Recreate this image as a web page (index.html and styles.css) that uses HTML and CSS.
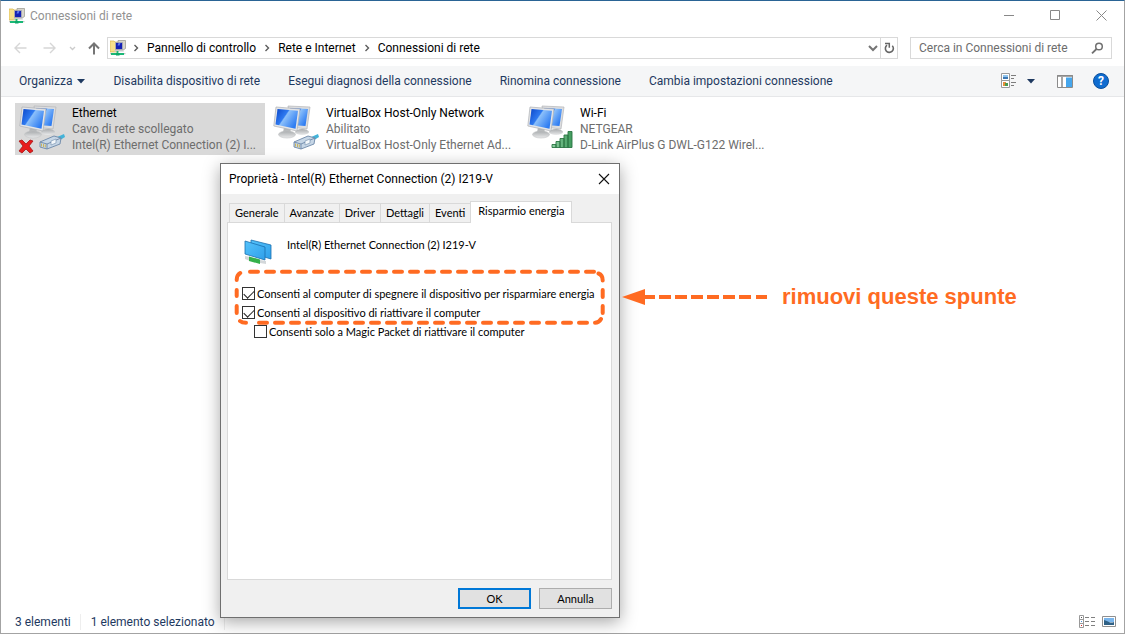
FILE: index.html
```html
<!DOCTYPE html>
<html lang="it">
<head>
<meta charset="utf-8">
<title>Connessioni di rete</title>
<link rel="stylesheet" href="styles.css">
</head>
<body>
<svg class="defs" aria-hidden="true">
  <defs>
    <linearGradient id="screen" x1="0" y1="0" x2="1" y2="0.6">
      <stop offset="0" stop-color="#0a46c8"/><stop offset="0.45" stop-color="#2f7af0"/><stop offset="0.5" stop-color="#8cc0fa"/><stop offset="1" stop-color="#2e7cf2"/>
    </linearGradient>
    <linearGradient id="stand" x1="0" y1="0" x2="0" y2="1">
      <stop offset="0" stop-color="#a8abad"/><stop offset="1" stop-color="#e9eaeb"/>
    </linearGradient>
    <linearGradient id="bars" x1="0" y1="0" x2="1" y2="0">
      <stop offset="0" stop-color="#8fd0a2"/><stop offset="1" stop-color="#3f9a5c"/>
    </linearGradient>
    <linearGradient id="flat" x1="0" y1="0" x2="1" y2="1">
      <stop offset="0" stop-color="#55c3fb"/><stop offset="1" stop-color="#2f9fea"/>
    </linearGradient>
  </defs>
  <symbol id="monitors" viewBox="0 0 40 34">
    <ellipse cx="29" cy="27" rx="7" ry="3" fill="url(#stand)"/>
    <path d="M15 1 37 2 34 24 17 22z" fill="#dcdddf" stroke="#b3b5b8" stroke-width=".7"/>
    <path d="M17 3 35 4 32.500 21 18 20z" fill="url(#screen)"/>
    <path d="M11 22h6l1 6h-8z" fill="#b4b7b9"/>
    <ellipse cx="14" cy="29.500" rx="8.500" ry="3.500" fill="url(#stand)" stroke="#c2c4c6" stroke-width=".6"/>
    <path d="M3 2 27 4 24 26 .8 21z" fill="#e4e5e7" stroke="#aeb0b4" stroke-width=".7"/>
    <path d="M4.500 4 25 5.700 22.500 23.800 2.500 19.500z" fill="url(#screen)"/>
  </symbol>
  <symbol id="plug" viewBox="0 0 27 17">
    <path d="M16 5 25 1l1 3-8 5z" fill="#43b3d9"/>
    <path d="M1 9 15 3l7 2-1 6-13 5-7-2z" fill="#c6d6e6" stroke="#6d88a8" stroke-width=".9"/>
    <path d="M1 9l7 2 14-6M8 11v5" fill="none" stroke="#6d88a8" stroke-width=".9"/>
    <path d="M2.500 10.500v3M4.500 11v3M6.300 11.500v3" stroke="#c8b050" stroke-width=".9"/>
    <path d="M12 8l5-2v4l-5 2z" fill="#f4f8fb" stroke="#7f99b5" stroke-width=".7"/>
  </symbol>
  <symbol id="folder" viewBox="0 0 16 16">
    <path d="M0 1h4l1 1h3v10H0z" fill="#f7e08a" stroke="#d6b54c" stroke-width=".7"/>
    <path d="M8 .5h7.500v8l-3 2H8z" fill="#d7d5cb" stroke="#96958c" stroke-width=".7"/>
    <path d="M5.500 2.500h7v7h-7z" fill="#d9dbe6" stroke="#8e90a5" stroke-width=".7"/>
    <path d="M6 3h6v6H6z" fill="#1420b4"/><path d="M8.500 3h2l-1 2.500h-2z" fill="#5f78ec"/>
    <path d="M5 10h8l1 1.500H4z" fill="#c8c9cc"/>
    <path d="M0 13.700h15.500" stroke="#b7bbb9"/><path d="M1 14h13M7.500 11v4" stroke="#19b877" stroke-width="1.800"/><path d="M6 13h3.500v2.500H6z" fill="#0ea768"/>
  </symbol>
  <symbol id="chev" viewBox="0 0 6 8"><path d="M1.500 1 4.500 4 1.500 7" fill="none" stroke="#5c5c5c" stroke-width="1.400"/></symbol>
</svg>

<div class="window">
  <header class="titlebar">
    <svg class="i16"><use href="#folder"/></svg>
    <h1 class="title">Connessioni di rete</h1>
    <div class="controls">
      <button class="icon-btn" aria-label="Riduci a icona"><svg width="11" height="11"><path d="M0 5.500h10" stroke="#888"/></svg></button>
      <button class="icon-btn" aria-label="Ingrandisci"><svg width="11" height="11"><path d="M.5.5h9v9h-9z" fill="none" stroke="#888"/></svg></button>
      <button class="icon-btn" aria-label="Chiudi"><svg width="11" height="11"><path d="M.5.5l10 10M10.500.5l-10 10" stroke="#888" fill="none"/></svg></button>
    </div>
  </header>

  <nav class="navbar">
    <button class="icon-btn" aria-label="Indietro"><svg width="13" height="12"><path d="M12.500 6H1M6 1 1 6l5 5" fill="none" stroke="#d6d6d6" stroke-width="1.400"/></svg></button>
    <button class="icon-btn fwd" aria-label="Avanti"><svg width="13" height="12"><path d="M.5 6H12M7 1l5 5-5 5" fill="none" stroke="#d6d6d6" stroke-width="1.400"/></svg></button>
    <button class="icon-btn recent" aria-label="Posizioni recenti"><svg width="7" height="5"><path d="M1 1l2.500 2.500L6 1" fill="none" stroke="#ccc" stroke-width="1.400"/></svg></button>
    <button class="icon-btn up" aria-label="Su"><svg width="12" height="13"><path d="M6 12.500V1.500M1 6.500l5-5 5 5" fill="none" stroke="#757575" stroke-width="2"/></svg></button>
    <div class="address">
      <svg class="i16"><use href="#folder"/></svg>
      <svg class="chev"><use href="#chev"/></svg><a class="crumb" href="#">Pannello di controllo</a>
      <svg class="chev"><use href="#chev"/></svg><a class="crumb" href="#">Rete e Internet</a>
      <svg class="chev"><use href="#chev"/></svg><a class="crumb" href="#">Connessioni di rete</a>
      <button class="icon-btn drop" aria-label="Percorsi precedenti"><svg width="10" height="7"><path d="M1 1l4 4 4-4" fill="none" stroke="#757575" stroke-width="2"/></svg></button>
      <button class="icon-btn refresh" aria-label="Aggiorna"><svg width="11" height="12"><path d="M8.300 3.700A4 4 0 1 1 3 3.200" fill="none" stroke="#666" stroke-width="1.600"/><path d="M1 1.500h4.300v4.300" fill="none" stroke="#666" stroke-width="1.500"/></svg></button>
    </div>
    <label class="search">
      <input class="search-input" type="text" placeholder="Cerca in Connessioni di rete" aria-label="Cerca in Connessioni di rete">
      <svg width="13" height="12"><circle cx="8" cy="4.500" r="3.300" fill="none" stroke="#707070" stroke-width="1.500"/><path d="M5.500 7 1 11.300" stroke="#707070" stroke-width="1.800"/></svg>
    </label>
  </nav>

  <div class="toolbar">
    <button class="cmd organize">Organizza <svg width="8" height="5"><path d="M0 0h8L4 4.500z" fill="#1e3960"/></svg></button>
    <button class="cmd">Disabilita dispositivo di rete</button>
    <button class="cmd">Esegui diagnosi della connessione</button>
    <button class="cmd">Rinomina connessione</button>
    <button class="cmd">Cambia impostazioni connessione</button>
    <div class="views">
      <button class="icon-btn" aria-label="Cambia visualizzazione"><svg width="16" height="16"><path d="M.5.5h8v7h-8zM.5 7.500h8v7h-8z" fill="#fff" stroke="#9a9a9a"/><path d="M2 2h5v2H2z" fill="#8fc4ee"/><path d="M2 4h5v2H2z" fill="#3c78b4"/><path d="M2 9h3v4H2z" fill="#e58f3c"/><path d="M4 10h3v3H4z" fill="#4a9a50"/><path d="M10 2.500h5M10 5.500h3M10 9.500h5M10 12.500h3" stroke="#7d7d7d"/></svg></button>
      <button class="icon-btn more" aria-label="Altre opzioni"><svg width="8" height="5"><path d="M0 0h8L4 4.500z" fill="#1e3960"/></svg></button>
      <button class="icon-btn" aria-label="Riquadro di anteprima"><svg width="16" height="13"><path d="M.5.5h15v12H.5z" fill="#fff" stroke="#8b8b8b"/><path d="M0 1h16M5 2v10" stroke="#8b8b8b" stroke-width="1.500"/><path d="M9 2.500h6V12H9z" fill="#46a6ec"/></svg></button>
      <button class="help" aria-label="Guida">?</button>
    </div>
  </div>

  <main class="content">
    <ul class="items">
      <li class="item selected">
        <svg class="conn" viewBox="0 0 52 50"><use href="#monitors" x="4" y="0" width="40" height="34"/><use href="#plug" x="24" y="28" width="27" height="17"/><path d="M4 36l3-1 4 4 4-4 3 1-4 5 4 5-3 2-4-4-4 4-3-2 4-5z" fill="#e81c1c" stroke="#a81414" stroke-width=".8"/></svg>
        <div class="info"><strong class="name">Ethernet</strong><span class="line">Cavo di rete scollegato</span><span class="line">Intel(R) Ethernet Connection (2) I...</span></div>
      </li>
      <li class="item">
        <svg class="conn" viewBox="0 0 52 50"><use href="#monitors" x="4" y="0" width="40" height="34"/><use href="#plug" x="24" y="28" width="27" height="17"/></svg>
        <div class="info"><strong class="name">VirtualBox Host-Only Network</strong><span class="line">Abilitato</span><span class="line">VirtualBox Host-Only Ethernet Ad...</span></div>
      </li>
      <li class="item">
        <svg class="conn" viewBox="0 0 52 50"><use href="#monitors" x="4" y="0" width="40" height="34"/><g fill="url(#bars)" stroke="#2b7544" stroke-width=".9"><path d="M29 39.500h4v3h-4zM33 36.500h4v6h-4zM37 33.500h4v9h-4zM41 30h4v12.500h-4zM45 26.500h4v16h-4z"/></g></svg>
        <div class="info"><strong class="name">Wi-Fi</strong><span class="line">NETGEAR</span><span class="line">D-Link AirPlus G DWL-G122 Wirel...</span></div>
      </li>
    </ul>
  </main>

  <footer class="status">
    <span class="count">3 elementi</span>
    <span class="count">1 elemento selezionato</span>
    <div class="modes">
      <button class="icon-btn" aria-label="Dettagli"><svg width="17" height="13"><path d="M.5.5h4v12h-4zM.5 4.500h4M.5 8.500h4" fill="#fff" stroke="#999"/><path d="M2 2h1v1H2z" fill="#555"/><path d="M2 6h1v1H2z" fill="#4a90d9"/><path d="M2 10h1v1H2z" fill="#d22"/><path d="M6 2.500h4M12 2.500h4M6 6.500h4M12 6.500h4M6 10.500h4M12 10.500h4" stroke="#808080"/></svg></button>
      <button class="icon-btn" aria-label="Icone grandi"><svg width="14" height="11"><path d="M.5.5h13v10H.5z" fill="#fff" stroke="#8f8f8f"/><path d="M2 2h10v4H2z" fill="#79b5ec"/><path d="M2 4q3 1 5 2t5 0v3H2z" fill="#2f6186"/></svg></button>
    </div>
  </footer>
</div>

<section class="dialog" role="dialog" aria-labelledby="dlg-title">
  <header class="dlg-head">
    <h2 class="dlg-title" id="dlg-title">Proprietà - Intel(R) Ethernet Connection (2) I219-V</h2>
    <button class="icon-btn" aria-label="Chiudi"><svg width="12" height="12"><path d="M1 1l10 10M11 1 1 11" stroke="#111" stroke-width="1.100"/></svg></button>
  </header>
  <div class="dlg-body">
    <div class="tabs" role="tablist">
      <button class="tab" role="tab">Generale</button>
      <button class="tab" role="tab">Avanzate</button>
      <button class="tab" role="tab">Driver</button>
      <button class="tab" role="tab">Dettagli</button>
      <button class="tab" role="tab">Eventi</button>
      <button class="tab active" role="tab" aria-selected="true">Risparmio energia</button>
    </div>
    <div class="panel">
      <div class="device">
        <svg width="28" height="26"><path d="M7 1 27 6v14L7 14z" fill="url(#flat)" stroke="#1a6fae" stroke-width=".8"/><path d="M1 2 21 8v13L1 15z" fill="url(#flat)" stroke="#1a6fae" stroke-width=".8"/><path d="M1 17l5 1v4l-5-2zM16 21l6 1v3l-6-1z" fill="#d3d7d9"/><path d="M5 17.500 16 20.500v4.500L5 22z" fill="#35b04a"/></svg>
        <span>Intel(R) Ethernet Connection (2) I219-V</span>
      </div>
      <div class="options">
        <label class="opt"><input class="check" type="checkbox" checked>Consenti al computer di spegnere il dispositivo per risparmiare energia</label>
        <label class="opt"><input class="check" type="checkbox" checked>Consenti al dispositivo di riattivare il computer</label>
        <label class="opt sub"><input class="check" type="checkbox">Consenti solo a Magic Packet di riattivare il computer</label>
      </div>
    </div>
    <div class="actions">
      <button class="btn default">OK</button>
      <button class="btn">Annulla</button>
    </div>
  </div>
  <svg class="ring" width="372" height="58" viewBox="234 268 372 58" aria-hidden="true">
    <g fill="none" stroke="#ff6b22" stroke-width="4" stroke-linecap="round">
      <path d="M250 271.700H594" stroke-dasharray="8 8"/>
      <path d="M259 322.700H592" stroke-dasharray="8 8"/>
      <path d="M236.700 280q0-5 3.500-7M236.700 290v6M236.700 306v7M240 321q2 1.700 6 1.700M598.500 273.500q4.200 1.500 4.200 7M602.700 290v7M602.700 306v7M601 319q-2 3.700-6 3.700"/>
    </g>
  </svg>
</section>

<div class="note">
  <svg width="146" height="16" aria-hidden="true"><path d="M0 8 23 0v16z" fill="#ff6b22"/><path d="M21 8h12M37 8h12M53 8h12M69 8h12M85 8h12M101 8h12M117 8h12M134 8h11" stroke="#ff6b22" stroke-width="4"/></svg>
  <span>rimuovi queste spunte</span>
</div>
</body>
</html>
```

FILE: styles.css
```css
* { box-sizing: border-box; }
body {
  margin: 0;
  background: #fff;
  color: #000;
  font: 12px/16px Roboto, "Noto Sans", sans-serif;
}
h1, h2, ul { margin: 0; padding: 0; font: inherit; }
svg { display: block; flex: none; }
button, input { font: inherit; color: inherit; }
.defs { position: absolute; width: 0; height: 0; }
.icon-btn {
  display: flex;
  align-items: center;
  justify-content: center;
  padding: 0;
  border: 0;
  background: none;
}
.i16 { width: 16px; height: 16px; }

.window {
  display: flex;
  flex-direction: column;
  min-height: 100vh;
  border: 1px solid #a3a3a3;
  border-top-color: #2a6495;
}
.titlebar {
  display: flex;
  align-items: center;
  height: 29px;
  padding: 0 17px 0 8px;
}
.title { margin-left: 5px; color: #929292; }
.controls { display: flex; gap: 35px; margin-left: auto; }

.navbar {
  display: flex;
  align-items: center;
  height: 36px;
  padding: 0 12px 0 13px;
}
.fwd { margin-left: 16px; }
.recent { margin-left: 13px; }
.up { margin-left: 12px; }
.address {
  display: flex;
  flex: 1;
  align-items: center;
  height: 22px;
  margin-left: 7px;
  padding-left: 2px;
  border: 1px solid #d9d9d9;
}
.chev { width: 6px; height: 8px; margin: 0 8px; }
.i16 + .chev { margin-left: 7px; }
.crumb { color: #000; text-decoration: none; }
.drop { margin-left: auto; }
.refresh {
  align-self: stretch;
  width: 17px;
  margin-left: 2px;
  border-left: 1px solid #d9d9d9;
}
.search {
  display: flex;
  align-items: center;
  width: 202px;
  height: 22px;
  margin-left: 12px;
  padding: 0 7px 0 8px;
  border: 1px solid #d9d9d9;
}
.search-input {
  flex: 1;
  min-width: 0;
  padding: 0;
  border: 0;
  outline: 0;
}
.search-input::placeholder { color: #6d6d6d; opacity: 1; }

.toolbar {
  display: flex;
  align-items: center;
  gap: 28px;
  height: 31px;
  padding: 0 15px 0 18px;
  border-bottom: 1px solid #e6e7e9;
  background: #f5f6f7;
  color: #1e3960;
}
.cmd {
  display: flex;
  align-items: center;
  gap: 5px;
  padding: 0;
  border: 0;
  background: none;
  white-space: nowrap;
}
.views { display: flex; align-items: center; margin-left: auto; }
.more { margin: 0 22px 0 10px; }
.help {
  width: 16px;
  height: 16px;
  margin-left: 20px;
  padding: 0;
  border: 1px solid #0a4f9c;
  border-radius: 50%;
  background: #0f6cd0;
  color: #fff;
  font-weight: 700;
  line-height: 14px;
}

.content { flex: 1; padding: 6px 14px; }
.items { display: flex; flex-wrap: wrap; gap: 4px; list-style: none; }
.item {
  display: flex;
  width: 250px;
  height: 52px;
  padding-top: 2px;
}
.selected { background: #d9d9d9; }
.conn { width: 52px; height: 50px; }
.info { display: flex; flex-direction: column; padding-left: 5px; }
.name { font-weight: 400; }
.line { color: #6d6d6d; white-space: nowrap; }

.status {
  display: flex;
  align-items: center;
  height: 23px;
  padding: 0 8px 0 14px;
  color: #1e3960;
}
.count {
  margin-right: 10px;
  padding-right: 9px;
  border-right: 1px solid #eee;
}
.modes { display: flex; align-items: center; gap: 6px; margin-left: auto; }

.dialog {
  position: absolute;
  top: 163px;
  left: 220px;
  width: 400px;
  border: 1px solid #6f6f6f;
  background: #f0f0f0;
  box-shadow: 0 4px 16px rgba(0, 0, 0, .35);
}
.dlg-head {
  display: flex;
  align-items: center;
  justify-content: space-between;
  height: 30px;
  padding: 0 9px 0 8px;
  background: #fff;
}
.dlg-body {
  padding: 7px 7px 8px 6px;
  font: 11px/16px Lato, "Liberation Sans", sans-serif;
}
.tabs { display: flex; align-items: flex-end; padding-left: 2px; }
.tab {
  height: 19px;
  padding: 0 5px;
  border: 1px solid #d9d9d9;
  border-width: 1px 0 0 1px;
  background: #f0f0f0;
  white-space: nowrap;
}
.active {
  z-index: 1;
  height: 22px;
  margin-bottom: -1px;
  padding: 0 7px 3px;
  border-right-width: 1px;
  background: #fff;
}
.panel {
  height: 358px;
  padding: 14px;
  border: 1px solid #d9d9d9;
  background: #fff;
}
.device { display: flex; gap: 15px; height: 47px; padding-left: 2px; }
.device svg { margin-top: 2px; }
.options { display: flex; flex-direction: column; }
.opt {
  display: flex;
  align-items: center;
  gap: 2px;
  height: 19px;
  white-space: nowrap;
}
.sub { margin-left: 12px; }
.check {
  appearance: none;
  width: 13px;
  height: 13px;
  margin: 0;
  border: 1px solid #333;
  background: #fff;
}
.check:checked::before {
  content: "";
  display: block;
  width: 9px;
  height: 5px;
  margin: 2px 0 0 1px;
  border: solid #222;
  border-width: 0 0 1px 1px;
  transform: rotate(-45deg);
}
.actions { display: flex; justify-content: flex-end; gap: 8px; padding-top: 8px; }
.btn {
  width: 73px;
  height: 21px;
  padding: 0;
  border: 1px solid #adadad;
  background: #e1e1e1;
}
.default { border: 2px solid #0078d7; }
.ring { position: absolute; top: 104px; left: 13px; }
.note {
  position: absolute;
  top: 284px;
  left: 622px;
  display: flex;
  align-items: center;
  gap: 14px;
  color: #ff6b22;
  font: bold 22px/26px "Liberation Sans", Arial, sans-serif;
}
```
